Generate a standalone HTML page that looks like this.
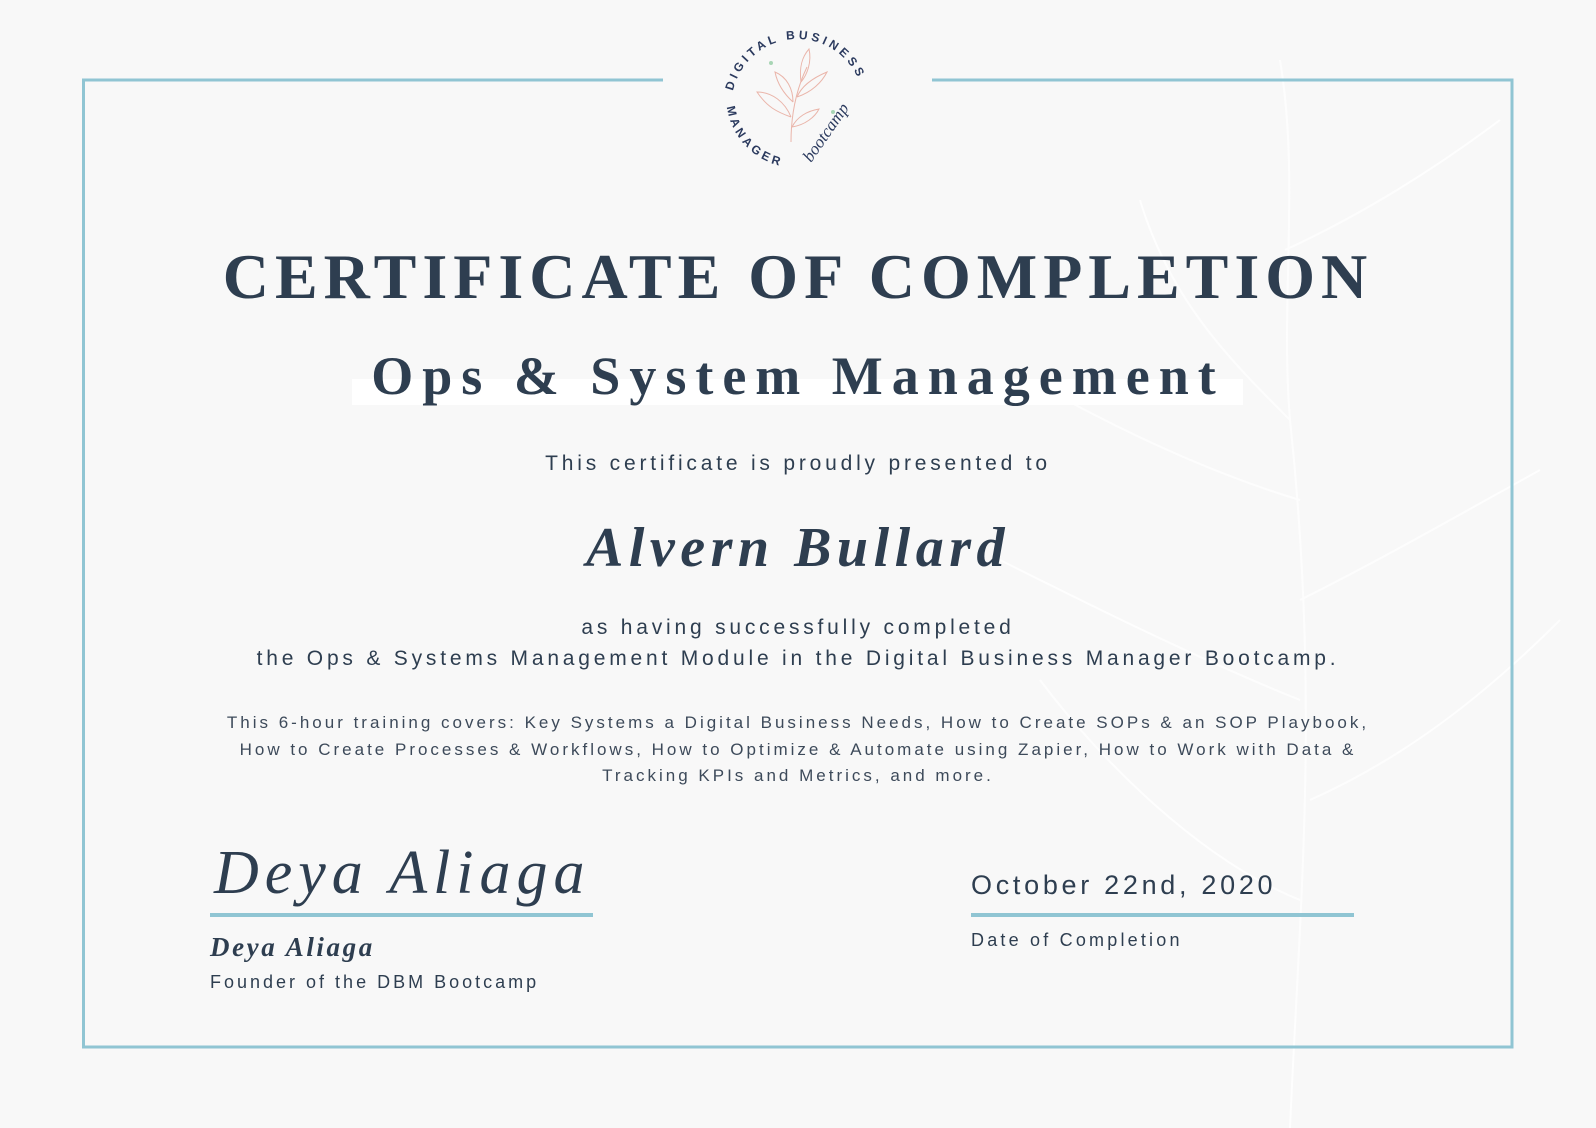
<!DOCTYPE html>
<html><head><meta charset="utf-8"><style>
html,body{margin:0;padding:0;}
body{width:1596px;height:1128px;background:#f8f8f8;position:relative;overflow:hidden;font-family:"Liberation Sans",sans-serif;color:#2e3e50;}
.a{position:absolute;white-space:nowrap;}
.c{left:0;width:1596px;text-align:center;}
.serif{font-family:"Liberation Serif",serif;font-weight:bold;}
</style></head><body>
<svg class="a" style="left:0;top:0" width="1596" height="1128">
  <g fill="none" stroke="#ffffff" stroke-width="2" opacity="0.8">
    <path d="M1290 1128 C1300 900 1320 700 1290 420 C1280 300 1300 180 1280 60"/>
    <path d="M1300 600 C1380 560 1450 520 1540 470"/>
    <path d="M1310 800 C1400 760 1480 700 1560 620"/>
    <path d="M1290 420 C1230 360 1170 300 1140 200"/>
    <path d="M1300 500 C1200 470 1100 420 1030 380"/>
    <path d="M1300 700 C1200 660 1080 600 1000 560"/>
    <path d="M1300 900 C1200 860 1100 760 1040 680"/>
    <path d="M1285 250 C1350 220 1420 180 1500 120"/>
  </g>
  <path d="M663 80 H83.5 V1047 H1512 V80 H932" fill="none" stroke="#90c5d3" stroke-width="3"/>
  <g transform="translate(797,97)">
    <defs><path id="arc" d="M-64 -6 A66 66 0 0 1 64 -10"/><path id="arc2" d="M-70 10 A70 70 0 0 0 -10 70"/></defs>
    <text font-family="Liberation Sans" font-weight="bold" font-size="12" fill="#2b3a5e" letter-spacing="3.5"><textPath href="#arc">DIGITAL BUSINESS</textPath></text>
    <text font-family="Liberation Sans" font-weight="bold" font-size="12" fill="#2b3a5e" letter-spacing="3.5"><textPath href="#arc2">MANAGER</textPath></text>
    <text x="14" y="66" font-family="Liberation Serif" font-style="italic" font-size="17" fill="#2b3a5e" transform="rotate(-55 14 66)">bootcamp</text>
    <g fill="none" stroke="#eab5aa" stroke-width="1">
      <path d="M-6 45 C-6 20 -2 -5 10 -30"/>
      <path d="M-6 20 C-20 15 -30 10 -40 -5 C-25 -5 -12 5 -6 20"/>
      <path d="M-4 5 C-15 -5 -20 -15 -22 -25 C-10 -20 -4 -8 -4 5"/>
      <path d="M0 0 C15 -5 25 -15 30 -25 C18 -20 5 -12 0 0"/>
      <path d="M4 -15 C2 -30 5 -40 12 -48 C15 -35 10 -22 4 -15"/>
      <path d="M-5 30 C8 28 18 20 22 12 C10 14 0 20 -5 30"/>
    </g>
    <circle cx="-26" cy="-34" r="2" fill="#a8d5b5"/><circle cx="36" cy="15" r="2" fill="#a8d5b5"/>
  </g>
</svg>
<div class="a c serif" style="top:240px;font-size:64px;letter-spacing:6px;">CERTIFICATE OF COMPLETION</div>
<div class="a" style="left:352px;top:379px;width:891px;height:26px;background:#fff;"></div>
<div class="a c serif" style="top:345px;font-size:54px;letter-spacing:9px;">Ops &amp; System Management</div>
<div class="a c" style="top:452px;font-size:21px;letter-spacing:3.8px;">This certificate is proudly presented to</div>
<div class="a c serif" style="top:516px;font-size:56px;font-style:italic;letter-spacing:5.5px;">Alvern Bullard</div>
<div class="a c" style="top:612px;font-size:21px;letter-spacing:3.8px;line-height:31px;">as having successfully completed<br>the Ops &amp; Systems Management Module in the Digital Business Manager Bootcamp.</div>
<div class="a c" style="top:710px;font-size:17px;letter-spacing:3px;line-height:26.5px;color:#3d4a5a;">This 6-hour training covers: Key Systems a Digital Business Needs, How to Create SOPs &amp; an SOP Playbook,<br>How to Create Processes &amp; Workflows, How to Optimize &amp; Automate using Zapier, How to Work with Data &amp;<br>Tracking KPIs and Metrics, and more.</div>
<div class="a" style="left:214px;top:838px;font-family:'Liberation Serif',serif;font-style:italic;font-size:62px;letter-spacing:6px;color:#2e3e50;">Deya Aliaga</div>
<div class="a" style="left:210px;top:913px;width:383px;height:4px;background:#90c5d3;"></div>
<div class="a serif" style="left:210px;top:932px;font-size:27px;font-style:italic;letter-spacing:2.6px;">Deya Aliaga</div>
<div class="a" style="left:210px;top:972px;font-size:18px;letter-spacing:3px;">Founder of the DBM Bootcamp</div>
<div class="a" style="left:971px;top:870px;font-size:27px;letter-spacing:3.7px;">October 22nd, 2020</div>
<div class="a" style="left:971px;top:913px;width:383px;height:4px;background:#90c5d3;"></div>
<div class="a" style="left:971px;top:930px;font-size:18px;letter-spacing:3.2px;">Date of Completion</div>
</body></html>
